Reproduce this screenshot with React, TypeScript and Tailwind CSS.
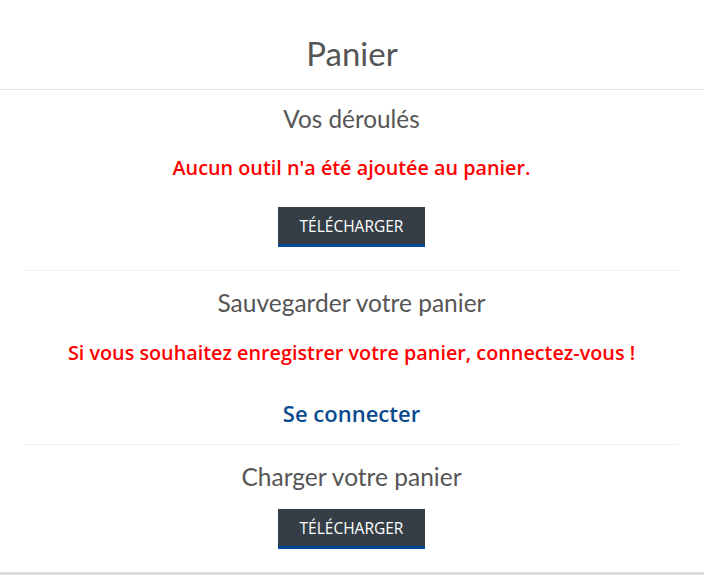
import React from "react";

function Btn() {
  return (
    <button className="h-[40px] w-[147px] bg-[#353e47] border-b-[3px] border-[#004a99] text-white text-[15.5px] font-['Open_Sans',sans-serif] flex items-center justify-center pt-[2px]">
      TÉLÉCHARGER
    </button>
  );
}

export default function App() {
  return (
    <div className="w-[704px] h-[575px] bg-white flex flex-col font-['Open_Sans',sans-serif] overflow-hidden">
      <div className="h-[90px] border-b border-[#e3e3e3] flex items-center justify-center pt-[17px]">
        <h1 className="font-['Lato',sans-serif] text-[33px] leading-[40px] text-[#555555]">Panier</h1>
      </div>
      <div className="flex-1 pl-[25px] pr-[26px] flex flex-col">
        <section className="flex flex-col items-center border-b border-[#f0f0f0] pb-[23px]">
          <h2 className="font-['Lato',sans-serif] text-[24.3px] text-[#555555] mt-[13px] leading-[32px]">Vos déroulés</h2>
          <p className="text-[#ff0000] text-[19.8px] font-semibold mt-[20px] leading-[26px]">Aucun outil n'a été ajoutée au panier.</p>
          <div className="mt-[26px]"><Btn /></div>
        </section>
        <section className="flex flex-col items-center border-b border-[#f0f0f0] pb-[16px]">
          <h2 className="font-['Lato',sans-serif] text-[24.5px] text-[#555555] mt-[16px] leading-[32px]">Sauvegarder votre panier</h2>
          <p className="text-[#ff0000] text-[19.8px] font-semibold mt-[21px] leading-[26px]">Si vous souhaitez enregistrer votre panier, connectez-vous !</p>
          <a className="text-[#0b4a8e] text-[22px] font-semibold mt-[32px] leading-[30px]">Se connecter</a>
        </section>
        <section className="flex flex-col items-center">
          <h2 className="font-['Lato',sans-serif] text-[24.5px] text-[#555555] mt-[16px] leading-[32px]">Charger votre panier</h2>
          <div className="mt-[16px]"><Btn /></div>
        </section>
      </div>
      <div className="h-[3px] bg-[#dddddd]" />
    </div>
  );
}
